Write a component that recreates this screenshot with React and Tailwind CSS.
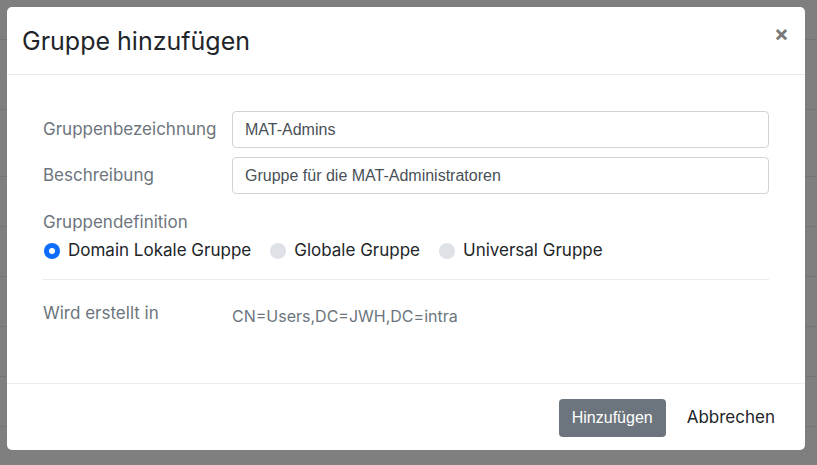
import React, { useState } from 'react';

const groupTypes = ['Domain Lokale Gruppe', 'Globale Gruppe', 'Universal Gruppe'];

function Radio({ label, checked, onSelect }) {
  return (
    <label className="flex items-center gap-[8px] cursor-pointer" onClick={onSelect}>
      {checked ? (
        <span className="w-[16px] h-[16px] rounded-full bg-[#0d6efd] flex items-center justify-center">
          <span className="w-[6px] h-[6px] rounded-full bg-white" />
        </span>
      ) : (
        <span className="w-[16px] h-[16px] rounded-full bg-[#dee2e6]" />
      )}
      <span className="text-[17px] text-[#212529]">{label}</span>
    </label>
  );
}

export default function App() {
  const [name, setName] = useState('MAT-Admins');
  const [desc, setDesc] = useState('Gruppe für die MAT-Administratoren');
  const [type, setType] = useState(0);

  return (
    <div className="relative w-[817px] h-[465px] overflow-hidden bg-[#7f7f7f]" style={{ fontFamily: 'Inter, sans-serif' }}>
      {/* page behind the backdrop */}
      <div className="flex flex-col">
        <div className="h-[40px] border-b border-[#747474]" />
        <div className="h-[70px] border-b border-[#747474]" />
        <div className="h-[67px] border-b border-[#747474]" />
        <div className="h-[50px] border-b border-[#747474]" />
        <div className="h-[50px] border-b border-[#747474]" />
        <div className="h-[50px] border-b border-[#747474]" />
        <div className="h-[50px] border-b border-[#747474]" />
        <div className="h-[50px] border-b border-[#747474]" />
      </div>

      <div className="absolute left-[7px] top-[7px] w-[798px] h-[443px] bg-white rounded-[5px] flex flex-col">
        <div className="h-[68px] shrink-0 flex items-start justify-between pl-[15px] pr-[16px] border-b border-[#e9ecef]">
          <h2 className="text-[25px] leading-[30px] mt-[19px] text-[#212529] font-normal">Gruppe hinzufügen</h2>
          <button className="text-[22px] leading-none font-bold text-[#7a7a7a] mt-[15px]">×</button>
        </div>

        <div className="flex-1 px-[36px] pt-[36px] flex flex-col">
          <div className="flex items-center">
            <span className="w-[189px] text-[17px] text-[#6c757d]">Gruppenbezeichnung</span>
            <input
              value={name}
              onChange={(e) => setName(e.target.value)}
              className="flex-1 h-[37px] px-[12px] border border-[#ced4da] rounded-[4px] text-[16px] text-[#495057] outline-none"
              style={{ fontFamily: '"Liberation Sans", Arial, sans-serif' }}
            />
          </div>
          <div className="flex items-center mt-[9px]">
            <span className="w-[189px] text-[17px] text-[#6c757d]">Beschreibung</span>
            <input
              value={desc}
              onChange={(e) => setDesc(e.target.value)}
              className="flex-1 h-[37px] px-[12px] border border-[#ced4da] rounded-[4px] text-[16px] text-[#495057] outline-none"
              style={{ fontFamily: '"Liberation Sans", Arial, sans-serif' }}
            />
          </div>
          <div className="mt-[16px] text-[17px] text-[#6c757d] leading-[24px]">Gruppendefinition</div>
          <div className="flex items-center gap-[19px] mt-[4px] pl-[1px]">
            {groupTypes.map((t, i) => (
              <Radio key={t} label={t} checked={type === i} onSelect={() => setType(i)} />
            ))}
          </div>
          <div className="h-px bg-[#e9ecef] mt-[15px]" />
          <div className="flex items-center mt-[20px]">
            <span className="w-[189px] text-[17px] text-[#6c757d]">Wird erstellt in</span>
            <span className="text-[16px] text-[#6c757d] pt-[4px]">CN=Users,DC=JWH,DC=intra</span>
          </div>
        </div>

        <div className="h-[67px] shrink-0 border-t border-[#e9ecef] flex items-center justify-end pr-[30px] pt-[2px] gap-[21px]">
          <button
            className="h-[38px] px-[13px] rounded-[4px] bg-[#6c757d] text-white text-[16px]"
            style={{ fontFamily: '"Liberation Sans", Arial, sans-serif' }}
          >
            Hinzufügen
          </button>
          <button className="text-[17px] text-[#212529]">Abbrechen</button>
        </div>
      </div>
    </div>
  );
}
